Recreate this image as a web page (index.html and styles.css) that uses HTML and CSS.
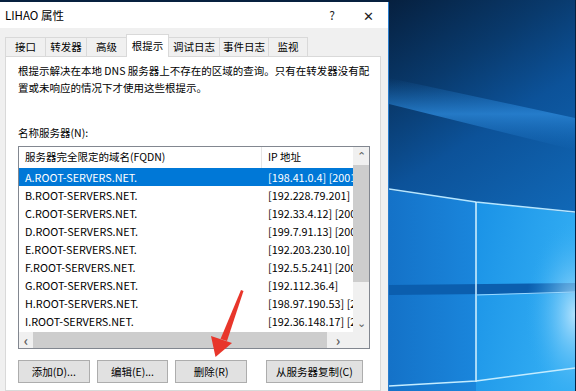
FILE: index.html
```html
<!DOCTYPE html>
<html lang="zh-CN">
<head>
    <meta charset="UTF-8">
    <title>LIHAO 属性</title>
    <link rel="stylesheet" href="styles.css">
</head>
<body>
    <div class="dialog">
        <div class="titlebar">
            <span class="title">LIHAO 属性</span>
            <div class="controls">
                <span class="ctl">?</span>
                <span class="ctl close">✕</span>
            </div>
        </div>

        <div class="frame">
            <div class="tabs">
                <div class="tab t-40">接口</div>
                <div class="tab t-41">转发器</div>
                <div class="tab t-40">高级</div>
                <div class="tab t-42 active">根提示</div>
                <div class="tab t-51">调试日志</div>
                <div class="tab t-49">事件日志</div>
                <div class="tab t-39">监视</div>
            </div>

            <div class="panel">
                <p class="desc">根提示解决在本地 DNS 服务器上不存在的区域的查询。只有在转发器没有配<br>置或未响应的情况下才使用这些根提示。</p>

                <div class="label">名称服务器(N):</div>

                <div class="listbox">
                    <div class="list-main">
                        <div class="list-view">
                            <div class="row head">
                                <span class="c1">服务器完全限定的域名(FQDN)</span>
                                <span class="c2">IP 地址</span>
                            </div>
                            <div class="row sel"><span class="c1">A.ROOT-SERVERS.NET.</span><span class="c2">[198.41.0.4] [2001</span></div>
                            <div class="row"><span class="c1">B.ROOT-SERVERS.NET.</span><span class="c2">[192.228.79.201] [</span></div>
                            <div class="row"><span class="c1">C.ROOT-SERVERS.NET.</span><span class="c2">[192.33.4.12] [200</span></div>
                            <div class="row"><span class="c1">D.ROOT-SERVERS.NET.</span><span class="c2">[199.7.91.13] [200</span></div>
                            <div class="row"><span class="c1">E.ROOT-SERVERS.NET.</span><span class="c2">[192.203.230.10]</span></div>
                            <div class="row"><span class="c1">F.ROOT-SERVERS.NET.</span><span class="c2">[192.5.5.241] [200</span></div>
                            <div class="row"><span class="c1">G.ROOT-SERVERS.NET.</span><span class="c2">[192.112.36.4]</span></div>
                            <div class="row"><span class="c1">H.ROOT-SERVERS.NET.</span><span class="c2">[198.97.190.53] [2</span></div>
                            <div class="row"><span class="c1">I.ROOT-SERVERS.NET.</span><span class="c2">[192.36.148.17] [2</span></div>
                        </div>
                        <div class="vscroll">
                            <span class="arrow">&#8963;</span>
                            <div class="vthumb"></div>
                            <span class="arrow down">&#8964;</span>
                        </div>
                    </div>
                    <div class="list-foot">
                        <div class="hscroll">
                            <span class="arrow">&lsaquo;</span>
                            <div class="hthumb"></div>
                            <span class="arrow">&rsaquo;</span>
                        </div>
                        <div class="corner"></div>
                    </div>
                </div>

                <div class="buttons">
                    <button class="btn">添加(D)...</button>
                    <button class="btn">编辑(E)...</button>
                    <button class="btn">删除(R)</button>
                    <button class="btn wide">从服务器复制(C)</button>
                </div>
            </div>
        </div>
    </div>

    <div class="desktop">
        <svg width="186" height="391" viewBox="0 0 186 391">
            <defs>
                <linearGradient id="sky" x1="0" y1="0" x2="0.3" y2="1">
                    <stop offset="0" stop-color="#06203f"/>
                    <stop offset="0.25" stop-color="#093a6d"/>
                    <stop offset="0.45" stop-color="#0c5299"/>
                    <stop offset="1" stop-color="#1478cc"/>
                </linearGradient>
                <linearGradient id="beam" x1="0" y1="0" x2="0" y2="1">
                    <stop offset="0" stop-color="#1d74c4" stop-opacity="0"/>
                    <stop offset="0.5" stop-color="#2b86d6" stop-opacity="0.8"/>
                    <stop offset="1" stop-color="#1d74c4" stop-opacity="0"/>
                </linearGradient>
                <linearGradient id="left" x1="0" y1="0" x2="1" y2="0">
                    <stop offset="0" stop-color="#1472c8"/>
                    <stop offset="1" stop-color="#1a86dc"/>
                </linearGradient>
                <linearGradient id="pane" x1="0" y1="0" x2="1" y2="0.4">
                    <stop offset="0" stop-color="#1a92e6"/>
                    <stop offset="1" stop-color="#32adf3"/>
                </linearGradient>
                <radialGradient id="glow" cx="1" cy="0.6" r="0.5">
                    <stop offset="0" stop-color="#bfe8ff" stop-opacity="0.9"/>
                    <stop offset="1" stop-color="#2eaaf2" stop-opacity="0"/>
                </radialGradient>
            </defs>
            <rect width="186" height="391" fill="url(#sky)"/>
            <polygon points="0,78 186,118 186,150 0,104" fill="url(#beam)"/>
            <polygon points="0,190 87,202 87,391 0,391" fill="url(#left)"/>
            <polygon points="87,202 186,213 186,391 87,391" fill="url(#pane)"/>
            <polygon points="0,285 186,283 186,293 0,295" fill="#0b5eae"/>
            <rect x="87" y="200" width="99" height="191" fill="url(#glow)"/>
            <polyline points="0,189 87,202 186,212" fill="none" stroke="#b6e6ff" stroke-width="1.5"/>
            <line x1="87" y1="202" x2="87" y2="382" stroke="#d6f2ff" stroke-width="1.5"/>
            <line x1="87" y1="295" x2="186" y2="292" stroke="#9ad8ff" stroke-width="1"/>
            <polyline points="0,386 87,381 186,368" fill="none" stroke="#c4ecff" stroke-width="1.5"/>
        </svg>
    </div>

    <svg class="pointer" width="576" height="391" viewBox="0 0 576 391">
        <polygon points="241,290 243.5,291 227,341 220.5,339" fill="#e8362b"/>
        <polygon points="211,336 232,343 215.5,357" fill="#e8362b"/>
    </svg>
</body>
</html>
```

FILE: styles.css
```css
body {
    margin: 0;
    width: 576px;
    height: 391px;
    overflow: hidden;
    display: flex;
    background: #06203f;
    font-family: "Segoe UI", "Noto Sans CJK SC", sans-serif;
    font-size: 10.5px;
    color: #000;
    position: relative;
}
.dialog {
    width: 388px;
    height: 389px;
    margin-top: 2px;
    border-right: 1px solid #2a7ccc;
    background: #f0f0f0;
    display: flex;
    flex-direction: column;
}
.titlebar {
    height: 26px;
    background: #fff;
    display: flex;
    align-items: center;
    justify-content: space-between;
    padding-left: 5px;
}
.title {
    font-size: 11.5px;
}
.controls {
    display: flex;
    padding-right: 2px;
}
.ctl {
    width: 36px;
    text-align: center;
    font-size: 12px;
    color: #222;
}
.close {
    font-size: 13px;
}
.frame {
    flex: 1;
    padding: 6px 7px 0 5px;
    display: flex;
    flex-direction: column;
}
.tabs {
    display: flex;
    align-items: flex-end;
    height: 22px;
}
.tab {
    box-sizing: border-box;
    height: 19px;
    line-height: 18px;
    text-align: center;
    border: 1px solid #d9d9d9;
    border-bottom: none;
    margin-right: -1px;
    background: #f0f0f0;
}
.t-39 { width: 40px; }
.t-40 { width: 41px; }
.t-41 { width: 42px; }
.t-42 { width: 43px; }
.t-49 { width: 50px; }
.t-51 { width: 52px; }
.tab.active {
    height: 23px;
    line-height: 21px;
    background: #fff;
    position: relative;
    z-index: 1;
    margin-bottom: -1px;
}
.panel {
    flex: 1;
    background: #fff;
    border: 1px solid #d9d9d9;
    padding: 5px 10px 0 12px;
}
.desc {
    margin: 0;
    line-height: 17px;
}
.label {
    margin-top: 28px;
    height: 17px;
    line-height: 17px;
}
.listbox {
    margin-top: 5px;
    width: 350px;
    height: 201px;
    border: 1px solid #828790;
    display: flex;
    flex-direction: column;
}
.list-main {
    flex: 1;
    display: flex;
    overflow: hidden;
}
.list-view {
    flex: 1;
    overflow: hidden;
    font-size: 10.8px;
}
.row {
    display: flex;
    height: 18px;
    line-height: 18px;
    white-space: nowrap;
}
.row.head {
    height: 21px;
    line-height: 20px;
    font-size: 10.5px;
}
.row.sel {
    background: #0078d7;
    color: #fff;
}
.c1 {
    width: 237px;
    padding-left: 6px;
    flex: none;
}
.c2 {
    padding-left: 6px;
}
.head .c1 {
    border-right: 1px solid #e5e5e5;
    width: 236px;
}
.vscroll {
    width: 16px;
    background: #f0f0f0;
    display: flex;
    flex-direction: column;
    align-items: center;
}
.arrow {
    height: 16px;
    line-height: 16px;
    font-size: 11px;
    color: #606060;
    text-align: center;
}
.vscroll .arrow {
    height: 18px;
}
.vthumb {
    width: 16px;
    height: 117px;
    background: #cdcdcd;
}
.vscroll .down {
    margin-top: auto;
}
.list-foot {
    height: 16px;
    display: flex;
}
.hscroll {
    flex: 1;
    background: #f0f0f0;
    display: flex;
    align-items: center;
}
.hscroll .arrow {
    width: 14px;
    font-size: 14px;
    font-weight: bold;
}
.hthumb {
    height: 16px;
    width: 294px;
    background: #cdcdcd;
    margin-right: 4px;
}
.corner {
    width: 16px;
    background: #f0f0f0;
}
.buttons {
    display: flex;
    margin-top: 11px;
}
.btn {
    box-sizing: border-box;
    width: 73px;
    height: 23px;
    margin-right: 7px;
    padding: 0;
    background: #e1e1e1;
    border: 1px solid #adadad;
    font-family: inherit;
    font-size: 10.5px;
    color: #000;
}
.btn:nth-child(3) {
    margin-right: 19px;
}
.btn.wide {
    width: 99px;
}
.desktop {
    flex: 1;
    display: flex;
}
.desktop svg {
    display: block;
}
.pointer {
    position: absolute;
    left: 0;
    top: 0;
    pointer-events: none;
}
```
